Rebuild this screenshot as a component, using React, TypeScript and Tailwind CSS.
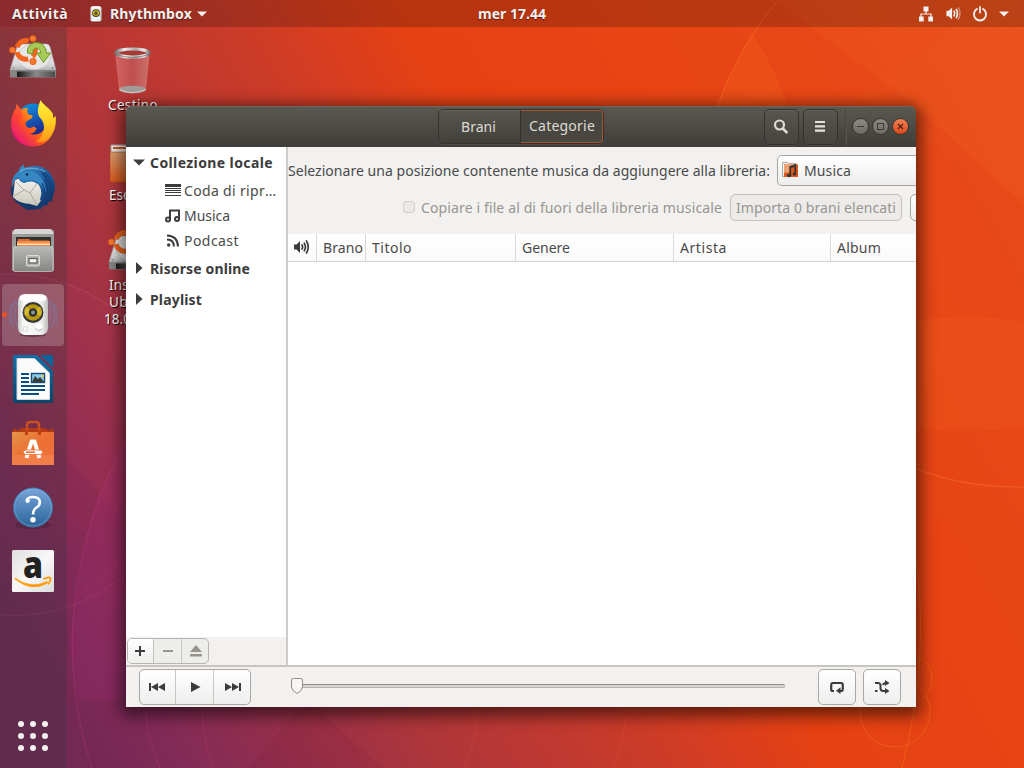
import { useLayoutEffect, useRef, useState } from "react";
import type { ReactNode } from "react";

const FONT = "font-['Noto_Sans','Open_Sans',sans-serif]";

/** A single line of text tracked so that it fills the given width. */
function Line({ w, className = "", children }: { w: number; className?: string; children: string }) {
  const ref = useRef<HTMLSpanElement>(null);
  const [track, setTrack] = useState(0);
  useLayoutEffect(() => {
    const el = ref.current;
    if (el) setTrack((w - el.getBoundingClientRect().width) / children.length);
  }, [w, children]);
  return (
    <span ref={ref} className={`inline-block shrink-0 whitespace-pre ${className}`} style={{ letterSpacing: `${track}px` }}>
      {children}
    </span>
  );
}

function Wallpaper() {
  return (
    <svg className="absolute inset-0" width="1024" height="768" viewBox="0 0 1024 768" aria-hidden="true">
      <defs>
        <linearGradient id="sky" gradientUnits="userSpaceOnUse" x1="-260" y1="149" x2="772" y2="-443">
          <stop offset="0" stopColor="#742855" />
          <stop offset="0.06" stopColor="#812a57" />
          <stop offset="0.15" stopColor="#952f4c" />
          <stop offset="0.25" stopColor="#ae363b" />
          <stop offset="0.41" stopColor="#cb3b29" />
          <stop offset="0.54" stopColor="#e64113" />
          <stop offset="0.7" stopColor="#e84414" />
          <stop offset="1" stopColor="#e84c1a" />
        </linearGradient>
      </defs>
      <rect width="1024" height="768" fill="url(#sky)" />
      <path d="M717 106Q735 60 752 34Q776 68 787 106Z" fill="#ff8a20" opacity="0.13" />
      <path d="M777 0H1024V205L916 106Q840 50 777 0Z" fill="#ff8a30" opacity="0.09" />
      <path d="M986 0L858 98L1024 200V0Z" fill="#ff9a40" opacity="0.03" />
      <path d="M778 0Q740 45 717 106" stroke="#ff8d2c" fill="none" opacity="0.35" />
      <ellipse cx="966" cy="374" rx="140" ry="57" fill="#ff8a28" opacity="0.1" />
      <path d="M904 463Q955 488 1024 487" stroke="#ff9136" fill="none" opacity="0.4" />
      <g stroke="#ff8a20" fill="none" opacity="0.35">
        <circle cx="895" cy="712" r="35" />
        <circle cx="907" cy="679" r="25" />
        <path d="M916 560Q930 660 902 768" />
      </g>
      <path d="M0 27H67L126 100V505L0 570Z" fill="#c04060" opacity="0.05" />
      <path d="M0 385L140 540L70 600Q35 615 0 615Z" fill="#501848" opacity="0.08" />
      <path d="M0 274Q75 272 126 320V560Q70 615 0 615Z" fill="#e0458a" opacity="0.05" />
      <path d="M0 274Q75 272 130 322" stroke="#e06a80" fill="none" opacity="0.25" />
      <path d="M78 700Q65 640 76 600Q85 505 126 440V700Z" fill="#b32a86" opacity="0.16" />
      <path d="M0 615Q75 620 130 570" stroke="#d0488a" fill="none" opacity="0.25" />
      <path d="M126 440C82 520 50 640 92 768M145 690Q143 730 160 768M202 690Q200 730 213 768" stroke="#d0407e" fill="none" opacity="0.28" />
      <path d="M308 700L382 768H248Z" fill="#701c30" opacity="0.12" />
      <path d="M478 707Q478 740 464 768M626 707Q626 740 612 768" stroke="#f06030" fill="none" opacity="0.2" />
    </svg>
  );
}

function SpeakerGlyph({ size, color }: { size: number; color: string }) {
  return (
    <svg width={size} height={size} viewBox="0 0 16 16" fill="none" stroke={color} strokeLinecap="round">
      <path d="M0.5 5H3L6.500 1.500V14.500L3 11H0.5Z" fill={color} stroke="none" />
      <path d="M8.700 5.600Q10 8 8.700 10.400" strokeWidth="1.800" />
      <path d="M11 3.600Q13.400 8 11 12.400" strokeWidth="1.800" />
      <path d="M13.300 2Q16.600 8 13.300 14" strokeWidth="1.600" opacity="0.450" />
    </svg>
  );
}

function SpeakerBox({ size, waves = false }: { size: number; waves?: boolean }) {
  return (
    <svg width={size} height={size} viewBox="0 0 48 48">
      <defs>
        <linearGradient id="box" x1="0" x2="1">
          <stop offset="0" stopColor="#c9c9c6" />
          <stop offset="0.2" stopColor="#fbfbfa" />
          <stop offset="0.8" stopColor="#ececea" />
          <stop offset="1" stopColor="#bdbdba" />
        </linearGradient>
      </defs>
      {waves && (
        <g fill="none" stroke="#7480b0" strokeWidth="1.600" opacity="0.450">
          <path d="M7 9Q-1 22 5 37M41 9Q49 22 43 37M3 13Q-2 23 1 33M45 13Q50 23 47 33M10 8Q3 22 9 38M38 8Q45 22 39 38" />
        </g>
      )}
      <ellipse cx="24" cy="43.500" rx="13" ry="2.500" fill="#20101c" opacity="0.4" />
      <rect x="9" y="3" width="30" height="41" rx="7" fill="url(#box)" />
      <rect x="10.500" y="4" width="27" height="6" rx="4" fill="#fff" />
      <circle cx="24" cy="21.500" r="10.500" fill="#353637" />
      <circle cx="24" cy="21.500" r="8.300" fill="#b89a12" />
      <path d="M24 21.500L17 15A9 9 0 0 0 16 25ZM24 21.500L31 15A9 9 0 0 1 32 25Z" fill="#e8cf3c" opacity="0.600" />
      <circle cx="24" cy="21.500" r="4.200" fill="#303332" />
      <circle cx="24" cy="21.500" r="1.900" fill="#8a969c" />
      <ellipse cx="30" cy="35.500" rx="3.400" ry="3" fill="#fff" />
      <path d="M26.600 37A3.500 3 0 0 0 33 38" stroke="#bbb" fill="none" />
      <rect x="14.500" y="36" width="4" height="4" fill="none" stroke="#dcdcd9" />
    </svg>
  );
}

function InstallDisk() {
  return (
    <svg width="48" height="48" viewBox="0 0 48 48">
      <defs>
        <linearGradient id="disk" x1="0" y1="0" x2="0" y2="1">
          <stop offset="0" stopColor="#ececec" />
          <stop offset="0.75" stopColor="#dcdcdc" />
          <stop offset="1" stopColor="#b4b4b4" />
        </linearGradient>
        <linearGradient id="slot" x1="0" x2="1">
          <stop offset="0" stopColor="#161616" />
          <stop offset="0.5" stopColor="#8a8a8a" />
          <stop offset="1" stopColor="#4a4a4a" />
        </linearGradient>
      </defs>
      <path d="M11 9H38Q40 9 41 12L47 35H1L8 12Q9 9 11 9Z" fill="url(#disk)" stroke="#a8a8a8" strokeWidth="0.600" />
      <rect x="1" y="35" width="46" height="7.500" rx="0.800" fill="#858585" />
      <rect x="8" y="36.500" width="38" height="5.500" fill="url(#slot)" />
      <ellipse cx="25" cy="22" rx="16.500" ry="12.500" fill="#e6e6e6" stroke="#c6c6c6" strokeWidth="0.800" />
      <circle cx="17" cy="15" r="9.300" fill="none" stroke="#f0641e" strokeWidth="5" strokeDasharray="14.600 4.880" transform="rotate(-45 17 15)" />
      <g fill="#f67a2e" stroke="#dd5313" strokeWidth="0.700">
        <circle cx="3.500" cy="15" r="3.100" />
        <circle cx="24" cy="3.600" r="3.100" />
        <circle cx="24" cy="26.500" r="3.200" />
      </g>
      <path d="M18.500 18C17 9 27 5 33.500 9.500Q37 12.500 37.500 18H41.500L34.500 27.500L28 18H32Q31 13 27 13Q23 13.500 24 19Z" fill="#a8ca58" stroke="#6c9a28" strokeWidth="1" />
      <circle cx="4.500" cy="33" r="0.800" fill="#777" />
      <circle cx="43.500" cy="33" r="0.800" fill="#777" />
    </svg>
  );
}

function Firefox() {
  return (
    <svg width="48" height="48" viewBox="0 0 48 48">
      <defs>
        <linearGradient id="fox" x1="0.900" y1="0.100" x2="0.100" y2="0.800">
          <stop offset="0" stopColor="#ffe22e" />
          <stop offset="0.350" stopColor="#ffa416" />
          <stop offset="0.650" stopColor="#ff5520" />
          <stop offset="1" stopColor="#e3157b" />
        </linearGradient>
        <linearGradient id="globe" x1="0" y1="0" x2="0.400" y2="1">
          <stop offset="0" stopColor="#0a9cec" />
          <stop offset="1" stopColor="#1d2f90" />
        </linearGradient>
        <linearGradient id="tail" x1="0" y1="0" x2="0" y2="1">
          <stop offset="0" stopColor="#fff23e" />
          <stop offset="0.500" stopColor="#ffcf22" />
          <stop offset="1" stopColor="#ff9417" />
        </linearGradient>
      </defs>
      <circle cx="24" cy="20" r="15.500" fill="url(#globe)" />
      <path d="M7.500 5L12 10.500Q15 8.500 19 9Q17 12.500 20 16H23.500L23 19L18 22Q15 25 18 28Q21 30 25 27.500L27.500 29.500Q26 34 21 35Q31 38 36 29L46 18C47 26 45 33 41 39C37 44 31 47.500 24 47.500C11 47.500 2 38 2 25C2 19 4 13 7 9Z" fill="url(#fox)" />
      <path d="M31.500 1C34 6 41 9 44 15V19L46.500 17C48 26 45 35 38 41Q33 44 27 43Q35 37 35 29Q35 22 30 17.500Q27 12 31.500 1Z" fill="url(#tail)" />
      <path d="M7 9Q-1 25 8 38Q13 44.500 21 47Q9 38 9 26Q9 20 14 18L12 11L7.500 6Z" fill="#ff3050" opacity="0.450" />
    </svg>
  );
}

function Thunderbird() {
  return (
    <svg width="48" height="48" viewBox="0 0 48 48">
      <defs>
        <linearGradient id="bird" x1="0" y1="0" x2="1" y2="1">
          <stop offset="0" stopColor="#3f98cf" />
          <stop offset="0.500" stopColor="#1f62a4" />
          <stop offset="1" stopColor="#0c2450" />
        </linearGradient>
        <linearGradient id="mail" x1="0" y1="0" x2="0" y2="1">
          <stop offset="0" stopColor="#f6f5f0" />
          <stop offset="1" stopColor="#c9c5ba" />
        </linearGradient>
      </defs>
      <path d="M3 22Q-1 31 8 40L18 47L30 46L40 38L34 22Z" fill="#15386a" />
      <path d="M6 17L12 15L30 18L38 30L28 43L21 41Q9 40 4 34Z" fill="url(#mail)" />
      <path d="M5 33L15 27L21 30L29 19M21 30L28 42M7 19L15 27" stroke="#a9a59a" strokeWidth="0.900" fill="none" />
      <path d="M3 26Q2 12 10 8Q10 4 15 1.500Q14 5 17 4.500Q31 0 39 8Q50 20 44 33L43 39L40 38L38 43L35 42L31 47Q33 39 31 36Q34 29 30 22Q25 17 18 19Q13 22 9 15Q4 18 3 26Z" fill="url(#bird)" />
      <path d="M10 14Q14 6 25 9Q36 14 37 30Q30 16 21 17Q14 19 10 14Z" fill="#3687c2" />
      <path d="M30 6Q42 12 44 27M33 10Q42 18 42 33M35 16Q41 24 38 39M33 20Q38 29 35 40" stroke="#123a72" strokeWidth="1.200" fill="none" />
      <path d="M11 9Q15 5 22 5.500Q30 5 36 9" stroke="#7dbbe2" strokeWidth="1.300" fill="none" opacity="0.700" />
      <circle cx="18" cy="11.500" r="1.200" fill="#0b2347" />
    </svg>
  );
}

function Files() {
  return (
    <svg width="48" height="48" viewBox="0 0 48 48">
      <defs>
        <linearGradient id="cab" x1="0" y1="0" x2="0" y2="1">
          <stop offset="0" stopColor="#b9b9b7" />
          <stop offset="1" stopColor="#858583" />
        </linearGradient>
      </defs>
      <rect x="3" y="3" width="42" height="41" rx="1.500" fill="#9b9b99" />
      <path d="M6 2H42L45 7H3Z" fill="#d6d6d4" />
      <rect x="7" y="10" width="35" height="10" fill="#33302e" />
      <path d="M9 12H20L22 13.500H40V16H9Z" fill="#dd6a30" />
      <rect x="8" y="14" width="33" height="5" fill="#f08a48" />
      <rect x="8" y="16.500" width="33" height="1.500" fill="#fbe0c0" />
      <path d="M5 19.500H43L44 22V43Q44 44.500 42.500 44.500H6Q4.500 44.500 4.500 43V22Z" fill="url(#cab)" stroke="#cfcfcd" strokeWidth="0.700" />
      <rect x="17.500" y="28.500" width="13" height="10.500" rx="1.500" fill="#b5b5b3" stroke="#dcdcda" />
      <rect x="20" y="31.500" width="8" height="4.500" fill="#f3f3f1" stroke="#5d5d5b" strokeWidth="1.200" />
    </svg>
  );
}

function Writer() {
  return (
    <svg width="48" height="48" viewBox="0 0 48 48">
      <defs>
        <linearGradient id="wr" x1="0" y1="0" x2="0" y2="1">
          <stop offset="0" stopColor="#0f6fa8" />
          <stop offset="1" stopColor="#084668" />
        </linearGradient>
      </defs>
      <path d="M6 0H28L44 16V46Q44 48 42 48H6Q4 48 4 46V2Q4 0 6 0Z" fill="url(#wr)" />
      <path d="M31 0H43Q44 0 44 1V13Z" fill="#0a649a" />
      <path d="M8 3.500H25.500L40.500 18V44.500H8Z" fill="#fbfbfb" stroke="#cfd5d8" />
      <path d="M12 19H20M12 23H20M12 27H20M12 31H36M12 35H36M12 39H30" stroke="#0b4f7c" strokeWidth="1.900" />
      <rect x="22.500" y="18.500" width="13" height="9" fill="#8ccaf0" stroke="#124c76" strokeWidth="1.400" />
      <path d="M23 27L26 21L29 24L31 22L35 27Z" fill="#3b3b35" />
      <circle cx="33.500" cy="21" r="1.300" fill="#f8c52a" />
    </svg>
  );
}

function Software() {
  return (
    <svg width="48" height="48" viewBox="0 0 48 48">
      <defs>
        <linearGradient id="bag" x1="0" y1="0" x2="1" y2="1">
          <stop offset="0" stopColor="#e59448" />
          <stop offset="0.500" stopColor="#ec6f33" />
          <stop offset="1" stopColor="#f07440" />
        </linearGradient>
      </defs>
      <path d="M3 13L6 9L8 12L12 9H36L40 12L43 9L45 13V16H3Z" fill="#b63b14" />
      <path d="M18 16V6.500Q18 3 21 3H27Q30 3 30 6.500V16" fill="none" stroke="#c94e22" strokeWidth="2.600" />
      <rect x="3" y="13" width="42" height="33" fill="url(#bag)" />
      <rect x="3" y="36" width="42" height="10" fill="#f58a58" opacity="0.500" />
      <path d="M17.500 11V16M30.500 11V16" stroke="#c1410f" strokeWidth="3.200" />
      <path d="M17.500 39L22.500 22.500H25.500L30.500 39" fill="none" stroke="#fff" strokeWidth="4" strokeLinejoin="round" />
      <rect x="14.500" y="31" width="19" height="4.500" rx="2.200" fill="#fff" stroke="#ec6f33" strokeWidth="0.800" />
      <path d="M17 33.200H26" stroke="#e86a2d" strokeWidth="1.500" />
    </svg>
  );
}

function Help() {
  return (
    <svg width="48" height="48" viewBox="0 0 48 48">
      <defs>
        <linearGradient id="hp" x1="0" y1="0" x2="0" y2="1">
          <stop offset="0" stopColor="#79a4da" />
          <stop offset="1" stopColor="#2a6499" />
        </linearGradient>
      </defs>
      <ellipse cx="24" cy="42" rx="18" ry="4" fill="#200818" opacity="0.200" />
      <circle cx="24" cy="24.500" r="19.500" fill="url(#hp)" stroke="#3d78ae" />
      <circle cx="24" cy="24.500" r="18.300" fill="none" stroke="#9dc0e6" strokeWidth="0.700" opacity="0.500" />
      <path d="M17.800 17.500Q18.500 14 24 14Q30.800 14 30.800 19.500Q30.800 22.500 27.500 24.500Q24.200 26.500 24 31.500" fill="none" stroke="#fff" strokeWidth="2.600" />
      <circle cx="18.600" cy="17.800" r="2.200" fill="#fff" />
      <circle cx="24" cy="36.800" r="2.700" fill="#fff" />
    </svg>
  );
}

function Amazon() {
  return (
    <svg width="48" height="48" viewBox="0 0 48 48">
      <defs>
        <linearGradient id="az" x1="0" y1="0" x2="1" y2="1">
          <stop offset="0" stopColor="#dedede" />
          <stop offset="0.500" stopColor="#f8f8f8" />
          <stop offset="1" stopColor="#dcdcdc" />
        </linearGradient>
      </defs>
      <rect x="3" y="3" width="42" height="42" rx="1.500" fill="url(#az)" />
      <text x="24" y="31" textAnchor="middle" fontFamily="Open Sans, sans-serif" fontWeight="800" fontSize="37" fill="#222" textLength="20" lengthAdjust="spacingAndGlyphs">a</text>
      <path d="M6 31Q22 42.500 38 34.500L38.500 36Q22 45.500 6 32Z" fill="#f90" stroke="#f90" strokeWidth="0.600" />
      <path d="M34.500 32Q40 29.500 41.500 31Q42 34 39 37.500" fill="none" stroke="#f90" strokeWidth="1.700" />
    </svg>
  );
}

function Dock() {
  const apps: ReactNode[] = [<InstallDisk />, <Firefox />, <Thunderbird />, <Files />, <SpeakerBox size={48} waves />, <Writer />, <Software />, <Help />, <Amazon />];
  return (
    <nav className="flex w-[67px] shrink-0 flex-col bg-[rgba(48,54,56,0.27)]">
      {apps.map((icon, i) => (
        <div key={i} className="relative flex h-16 w-[66px] items-center justify-center">
          {i === 4 && <div className="absolute top-px left-0.5 h-[62px] w-[62px] rounded bg-white/20" />}
          {i === 4 && <div className="absolute top-[29px] left-0.5 h-[5px] w-[5px] rounded-full bg-[#e95420]" />}
          <div className="relative">{icon}</div>
        </div>
      ))}
      <div className="mt-auto mb-[17px] ml-[18px] grid w-[30px] grid-cols-3 gap-1.5">
        {Array.from({ length: 9 }, (_, i) => (
          <div key={i} className="h-1.5 w-1.5 rounded-full bg-[#f3f0f2]" />
        ))}
      </div>
    </nav>
  );
}

function TopBar() {
  return (
    <header className="relative flex h-[27px] shrink-0 items-center bg-black/20 text-[14px] font-bold text-[#f2f0ee] [text-shadow:0_1px_1px_rgba(0,0,0,0.5)]">
      <div className="ml-3 flex"><Line w={56}>Attività</Line></div>
      <div className="ml-[19px] flex"><SpeakerBox size={18} /></div>
      <div className="ml-[5px] flex"><Line w={82}>Rhythmbox</Line></div>
      <svg className="ml-[5px]" width="10" height="6" viewBox="0 0 10 6"><path d="M0 0.500H10L5 5.500Z" fill="#f2f0ee" /></svg>
      <div className="absolute top-0 left-[478px] flex h-[27px] items-center"><Line w={68}>mer 17.44</Line></div>
      <div className="mr-[15px] ml-auto flex items-center">
        <svg width="14" height="16" viewBox="0 0 14 16" fill="#f2f0ee">
          <rect x="4.500" y="0.500" width="5" height="5" /><rect x="0" y="10.500" width="4.700" height="5" /><rect x="9.300" y="10.500" width="4.700" height="5" />
          <path d="M2 11V8H12V11M7 5V8" fill="none" stroke="#f2f0ee" strokeWidth="1.200" />
        </svg>
        <div className="ml-[13px]"><SpeakerGlyph size={15} color="#f2f0ee" /></div>
        <svg className="ml-3" width="14" height="16" viewBox="0 0 14 16" fill="none" stroke="#f2f0ee" strokeWidth="1.800" strokeLinecap="round">
          <path d="M4 3Q1 4.500 1 8.500A6 6 0 0 0 13 8.500Q13 4.500 10 3M7 1V6.500" />
        </svg>
        <svg className="ml-3" width="10" height="6" viewBox="0 0 10 6"><path d="M0 0.500H10L5 5.500Z" fill="#f2f0ee" /></svg>
      </div>
    </header>
  );
}

function DesktopIcons() {
  const label = "text-[13.5px] leading-[17px] text-white [text-shadow:1px_1px_1px_#000]";
  return (
    <>
      <svg className="absolute top-[46px] left-[112px]" width="42" height="50" viewBox="0 0 42 50">
        <defs>
          <linearGradient id="rim" x1="0" x2="1"><stop offset="0" stopColor="#777" /><stop offset="0.250" stopColor="#eee" /><stop offset="0.600" stopColor="#aaa" /><stop offset="0.850" stopColor="#eee" /><stop offset="1" stopColor="#777" /></linearGradient>
          <linearGradient id="bin" x1="0" x2="1"><stop offset="0" stopColor="#d8686a" /><stop offset="0.500" stopColor="#c05454" /><stop offset="1" stopColor="#cf7a74" /></linearGradient>
        </defs>
        <path d="M4 10L7.500 43Q20 48 33.500 43L37 10Z" fill="url(#bin)" opacity="0.850" stroke="#d88a86" strokeWidth="0.600" />
        <ellipse cx="20.500" cy="43.500" rx="13.500" ry="3.800" fill="#a39c9a" />
        <path d="M7.500 43.500Q20.500 50 33.500 43.500" fill="none" stroke="#e4dfdd" strokeWidth="0.800" />
        <ellipse cx="20.500" cy="7" rx="16.500" ry="4" fill="#a83a36" stroke="url(#rim)" strokeWidth="3.200" />
        <path d="M3 8Q20.500 15 38 8" fill="none" stroke="#6d6866" strokeWidth="0.700" />
      </svg>
      <div className={`absolute top-[97px] left-[108px] flex ${label}`}><Line w={50}>Cestino</Line></div>
      <svg className="absolute top-[144px] left-[110px]" width="46" height="40" viewBox="0 0 46 40">
        <defs><linearGradient id="fold" x1="0" y1="0" x2="0" y2="1"><stop offset="0" stopColor="#dba070" /><stop offset="1" stopColor="#dd5a1b" /></linearGradient></defs>
        <path d="M1 1H20V10H1Z" fill="#eee" stroke="#b7a198" /><path d="M3 4H20" stroke="#c95a24" strokeWidth="2" />
        <rect x="0" y="8" width="44" height="30" rx="1" fill="url(#fold)" stroke="#b0501d" strokeWidth="0.600" />
      </svg>
      <div className={`absolute top-[187px] left-[109px] flex ${label}`}><Line w={46}>Esempi</Line></div>
      <div className="absolute top-[227px] left-[108px]"><InstallDisk /></div>
      <div className={`absolute top-[277px] left-[104px] flex flex-col items-start ${label}`}>
        <div className="flex pl-[5px]"><Line w={48}>Installa</Line></div>
        <div className="flex pl-[5px]"><Line w={50}>Ubuntu</Line></div>
        <div className="flex"><Line w={60}>18.04 LTS</Line></div>
      </div>
    </>
  );
}

function TitleBar() {
  const btn = "flex h-9 w-[35px] items-center justify-center rounded-[5px] border border-[#33322e] bg-linear-to-b from-[#57564f] to-[#45443f] shadow-[inset_0_1px_0_rgba(255,255,255,0.08),0_1px_0_rgba(255,255,255,0.07)]";
  const round = "flex h-[17px] w-[17px] items-center justify-center rounded-full border border-[#34332f]";
  return (
    <div className="relative flex h-[41px] shrink-0 items-center justify-end rounded-t-[6px] bg-linear-to-b from-[#5b5a51] to-[#3e3d39] pr-[7px] text-[14px] text-[#dfdbd2] shadow-[inset_0_1px_0_#69675e]">
      <div className="absolute top-[3px] left-[312px] flex h-[35px] w-[166px] rounded-[5px] border border-[#33322e] shadow-[0_1px_0_rgba(255,255,255,0.08)]">
        <div className="flex w-[81px] items-center pl-[22px] shadow-[inset_0_1px_0_rgba(255,255,255,0.08)]"><Line w={35}>Brani</Line></div>
        <div className="flex flex-1 items-center rounded-r-[4px] border border-[#a9532f] border-l-[#33322e] bg-[#474640] pl-2 pb-px"><Line w={66}>Categorie</Line></div>
      </div>
      <div className={btn}>
        <svg className="-ml-0.5" width="16" height="16" viewBox="0 0 16 16" fill="none" stroke="#dfdbd2"><circle cx="6.500" cy="6" r="4.500" strokeWidth="2.200" /><path d="M9.800 9.500L14.300 14" strokeWidth="2.500" /></svg>
      </div>
      <div className={`${btn} ml-1`}>
        <svg className="-mt-0.5 -ml-0.5" width="10" height="12" viewBox="0 0 10 12"><path d="M0 2H10M0 6.300H10M0 10.600H10" stroke="#e6e2d9" strokeWidth="2.200" /></svg>
      </div>
      <div className="ml-[7px] h-9 w-0.5 border-l border-[#46453f] bg-[#57564f]" />
      <div className="mb-px ml-[5px] flex gap-[3px]">
        <div className={`${round} bg-linear-to-b from-[#8b8a83] to-[#6c6b64]`}><svg className="shrink-0" width="9" height="9" viewBox="0 0 9 9"><path d="M1 4.500H8" stroke="#3c3b37" strokeWidth="1" /></svg></div>
        <div className={`${round} bg-linear-to-b from-[#8b8a83] to-[#6c6b64]`}><svg className="shrink-0" width="9" height="9" viewBox="0 0 9 9"><rect x="1.500" y="1.500" width="6" height="6" fill="none" stroke="#3c3b37" /></svg></div>
        <div className={`${round} bg-linear-to-b from-[#f28055] to-[#dd4814]`}><svg className="shrink-0" width="9" height="9" viewBox="0 0 9 9"><path d="M2 2L7 7M7 2L2 7" stroke="#4c2114" strokeWidth="1.200" /></svg></div>
      </div>
    </div>
  );
}

function Sidebar() {
  const sub = "flex h-[25px] items-center pl-[39px]";
  return (
    <aside className="flex w-[160px] shrink-0 flex-col bg-white text-[#4a4a4a]">
      <div className="flex flex-1 flex-col">
        <div className="mt-px flex h-[30px] items-center pl-[7px] font-bold text-[#3c3c3c]">
          <svg className="-mt-0.5" width="12" height="7" viewBox="0 0 12 7"><path d="M0 0.500H12L6 6.500Z" fill="#3c3c3c" /></svg>
          <div className="ml-[5px] flex"><Line w={123}>Collezione locale</Line></div>
        </div>
        <div className={sub}>
          <svg className="-mt-px" width="16" height="13" viewBox="0 0 16 13" shapeRendering="crispEdges" fill="#3c3c3c"><path d="M0 0H16V3H0ZM0 4H16V5H0ZM0 6H16V7H0ZM0 8H16V9H0ZM0 11H16V12H0Z" /></svg>
          <div className="ml-[3px] flex"><Line w={81}>Coda di ripr</Line><Line w={13}>…</Line></div>
        </div>
        <div className={sub}>
          <svg width="16" height="16" viewBox="0 0 16 16" fill="none" stroke="#3c3c3c" strokeWidth="2"><circle cx="3" cy="11.500" r="2" /><circle cx="12" cy="11" r="2" /><path d="M5 12V2.500H14V11" /></svg>
          <div className="ml-[3px] flex"><Line w={46}>Musica</Line></div>
        </div>
        <div className={sub}>
          <svg width="16" height="16" viewBox="0 0 16 16" fill="none" stroke="#3c3c3c" strokeWidth="2"><circle cx="3.700" cy="12" r="1.700" fill="#3c3c3c" stroke="none" /><path d="M2 6.500Q8.800 6.700 9 13.500M2 2.500Q12.800 3 13 13.500" /></svg>
          <div className="ml-[3px] flex"><Line w={55}>Podcast</Line></div>
        </div>
        <div className="flex h-[31px] items-center pl-[10px] font-bold text-[#3c3c3c]">
          <svg className="-mt-px" width="7" height="12" viewBox="0 0 7 12"><path d="M0 0V12L6.500 6Z" fill="#3c3c3c" /></svg>
          <div className="ml-[7px] flex"><Line w={100}>Risorse online</Line></div>
        </div>
        <div className="flex h-[31px] items-center pl-[10px] font-bold text-[#3c3c3c]">
          <svg className="-mt-px" width="7" height="12" viewBox="0 0 7 12"><path d="M0 0V12L6.500 6Z" fill="#3c3c3c" /></svg>
          <div className="ml-[7px] flex"><Line w={52}>Playlist</Line></div>
        </div>
      </div>
      <div className="flex h-7 items-start bg-[#f2f1f0] pt-px pl-px">
        <div className="flex h-[26px] w-[82px] overflow-hidden rounded-[5px] border border-[#b8b6b3] bg-[#ededec]">
          <div className="flex w-[26px] items-center justify-center border-r border-[#c4c2bf] bg-linear-to-b from-white to-[#efeeed] pr-px"><svg width="10" height="10" viewBox="0 0 10 10"><path d="M5 0V10M0 5H10" stroke="#3c3c3c" strokeWidth="2" /></svg></div>
          <div className="flex w-7 items-center justify-center border-r border-[#c8c6c3]"><svg width="10" height="2" viewBox="0 0 10 2"><path d="M0 1H10" stroke="#99958e" strokeWidth="2" /></svg></div>
          <div className="flex flex-1 items-center justify-center pl-px"><svg className="-mt-px" width="12" height="12" viewBox="0 0 12 12"><path d="M6 0L12 7H0ZM0 9H12V11.500H0Z" fill="#99958e" /></svg></div>
        </div>
      </div>
    </aside>
  );
}

function Content() {
  const cell = "flex items-center border-r border-[#dcdad8] pl-1.5";
  return (
    <main className="flex min-w-0 flex-1 flex-col overflow-hidden bg-white text-[#4a4a4a]">
      <div className="h-[87px] shrink-0 bg-[#f2f1f0] pt-2">
        <div className="flex h-[31px] items-center">
          <Line w={482}>Selezionare una posizione contenente musica da aggiungere alla libreria:</Line>
          <div className="ml-[7px] flex h-[31px] w-[180px] shrink-0 items-center rounded-[5px] border border-[#a6a4a1] bg-linear-to-b from-white to-[#eeedec] pl-1">
            <svg className="-mt-px" width="16" height="16" viewBox="0 0 16 16"><path d="M0.500 0.500H6L7 1.500H12.500V14.500H0.500Z" fill="#f4f2f0" stroke="#9a9591" strokeWidth="0.800" /><rect x="2" y="2.500" width="14" height="12.500" fill="#e0561f" /><rect x="2" y="2.500" width="7" height="8" fill="#eda273" /><ellipse cx="7" cy="13.500" rx="2.200" ry="1.800" fill="#38342f" /><ellipse cx="12.500" cy="12" rx="1.800" ry="1.600" fill="#38342f" /><path d="M8.200 13.500V5Q11 5 13.300 3V12" fill="none" stroke="#38342f" strokeWidth="1.800" /></svg>
            <div className="ml-1.5 flex"><Line w={47}>Musica</Line></div>
          </div>
        </div>
        <div className="mt-2 flex h-7 items-center pl-[115px] text-[#98958f]">
          <div className="mr-1.5 mb-0.5 h-3 w-3 shrink-0 rounded-[3px] border border-[#d0cecb] bg-[#eae9e8]" />
          <Line w={301}>Copiare i file al di fuori della libreria musicale</Line>
          <div className="mb-px ml-2 flex h-[27px] w-[172px] shrink-0 items-center rounded-[5px] border border-[#c4c2bf] bg-[#ecebea] pl-[5px]"><Line w={160}>Importa 0 brani elencati</Line></div>
          <div className="mb-px ml-2 h-[27px] w-10 shrink-0 rounded-[5px] border border-[#a6a4a1] bg-linear-to-b from-white to-[#eeedec]" />
        </div>
      </div>
      <div className="flex h-7 shrink-0 border-b border-[#d5d3d1] bg-linear-to-b from-white to-[#fafafa]">
        <div className={`${cell} w-[29px]`}>
          <svg className="-mt-0.5" width="16" height="16" viewBox="0 0 16 16" fill="none" stroke="#3c3c3c" strokeLinecap="round"><path d="M0 5.500H2.500L6 2V14L2.500 10.500H0Z" fill="#3c3c3c" stroke="none" /><path d="M8 6Q9.200 8 8 10M10.300 4.200Q12.600 8 10.300 11.800M12.500 2Q16 8 12.500 14" strokeWidth="1.700" /></svg>
        </div>
        <div className={`${cell} w-[49px]`}><Line w={40}>Brano</Line></div>
        <div className={`${cell} w-[150px]`}><Line w={40}>Titolo</Line></div>
        <div className={`${cell} w-[158px]`}><Line w={48}>Genere</Line></div>
        <div className={`${cell} w-[157px]`}><Line w={47}>Artista</Line></div>
        <div className="flex flex-1 items-center pl-1.5"><Line w={44}>Album</Line></div>
      </div>
    </main>
  );
}

function Player() {
  const face = "border border-[#aaa8a5] bg-linear-to-b from-white to-[#efeeed]";
  return (
    <footer className="flex h-[42px] shrink-0 items-center border-t-2 border-[#c8c5c2] bg-[#f2f1f0]">
      <div className={`ml-[13px] flex h-9 w-[112px] rounded-[5px] ${face}`}>
        <div className="flex w-9 items-center justify-center border-r border-[#c8c6c3] pr-0.5"><svg width="16" height="8" viewBox="0 0 16 8"><path d="M0 0H2V8H0ZM9 0V8L2 4ZM16 0V8L9 4Z" fill="#3c3c3c" /></svg></div>
        <div className="flex w-[38px] items-center justify-center border-r border-[#c8c6c3] pl-0.5"><svg width="10" height="10" viewBox="0 0 10 10"><path d="M0 0V10L9.500 5Z" fill="#3c3c3c" /></svg></div>
        <div className="flex flex-1 items-center justify-center pl-0.5"><svg width="16" height="8" viewBox="0 0 16 8"><path d="M16 0H14V8H16ZM0 0V8L7 4ZM7 0V8L14 4Z" fill="#3c3c3c" /></svg></div>
      </div>
      <div className="relative -mt-0.5 ml-[43px] h-1 w-[491px] rounded-full border border-[#b5b3b0] border-t-[#8f8d8a] bg-[#d6d4d2]">
        <svg className="absolute -top-[8px] -left-[5px]" width="14" height="18" viewBox="0 0 14 18"><path d="M1.500 3Q1.500 1.500 3.500 1.500H10.500Q12.500 1.500 12.500 3V10Q12 14 7 16.500Q2 14 1.500 10Z" fill="#f7f6f5" stroke="#8f8d8a" /></svg>
      </div>
      <div className={`ml-[33px] flex h-9 w-[38px] items-center justify-center rounded-[5px] ${face}`}>
        <svg width="16" height="14" viewBox="0 0 16 14" fill="none" stroke="#3c3c3c" strokeWidth="2.200"><path d="M5 11H4Q2.200 11 2.200 9.500V5Q2.200 3 4 3H12Q13.800 3 13.800 5V9Q13.800 11 12 11H10.500" /><path d="M7 10.800L11.500 7.300V14Z" fill="#3c3c3c" stroke="none" /></svg>
      </div>
      <div className={`ml-[7px] flex h-9 w-[38px] items-center justify-center rounded-[5px] ${face}`}>
        <svg width="16" height="14" viewBox="0 0 16 14" fill="none" stroke="#3c3c3c" strokeWidth="2"><path d="M1 3H4Q6 3 6.500 5V8.500Q7 11 9 11H12M9 5Q9.500 3 12 3M1 11H3.500" /><path d="M11 0L15.500 3L11 6ZM11 8L15.500 11L11 14Z" fill="#3c3c3c" stroke="none" /></svg>
      </div>
    </footer>
  );
}

export default function App() {
  return (
    <div className={`relative flex h-[768px] w-[1024px] flex-col overflow-hidden bg-[#e84415] ${FONT}`}>
      <Wallpaper />
      <DesktopIcons />
      <TopBar />
      <div className="relative flex flex-1"><Dock /></div>
      <section className="absolute top-[106px] left-[126px] flex h-[601px] w-[790px] flex-col rounded-t-[6px] text-[14px] leading-[20px] shadow-[0_4px_16px_5px_rgba(0,0,0,0.55)]">
        <TitleBar />
        <div className="flex min-h-0 flex-1">
          <Sidebar />
          <div className="w-0.5 shrink-0 bg-[#cfcbc8]" />
          <Content />
        </div>
        <Player />
      </section>
    </div>
  );
}
